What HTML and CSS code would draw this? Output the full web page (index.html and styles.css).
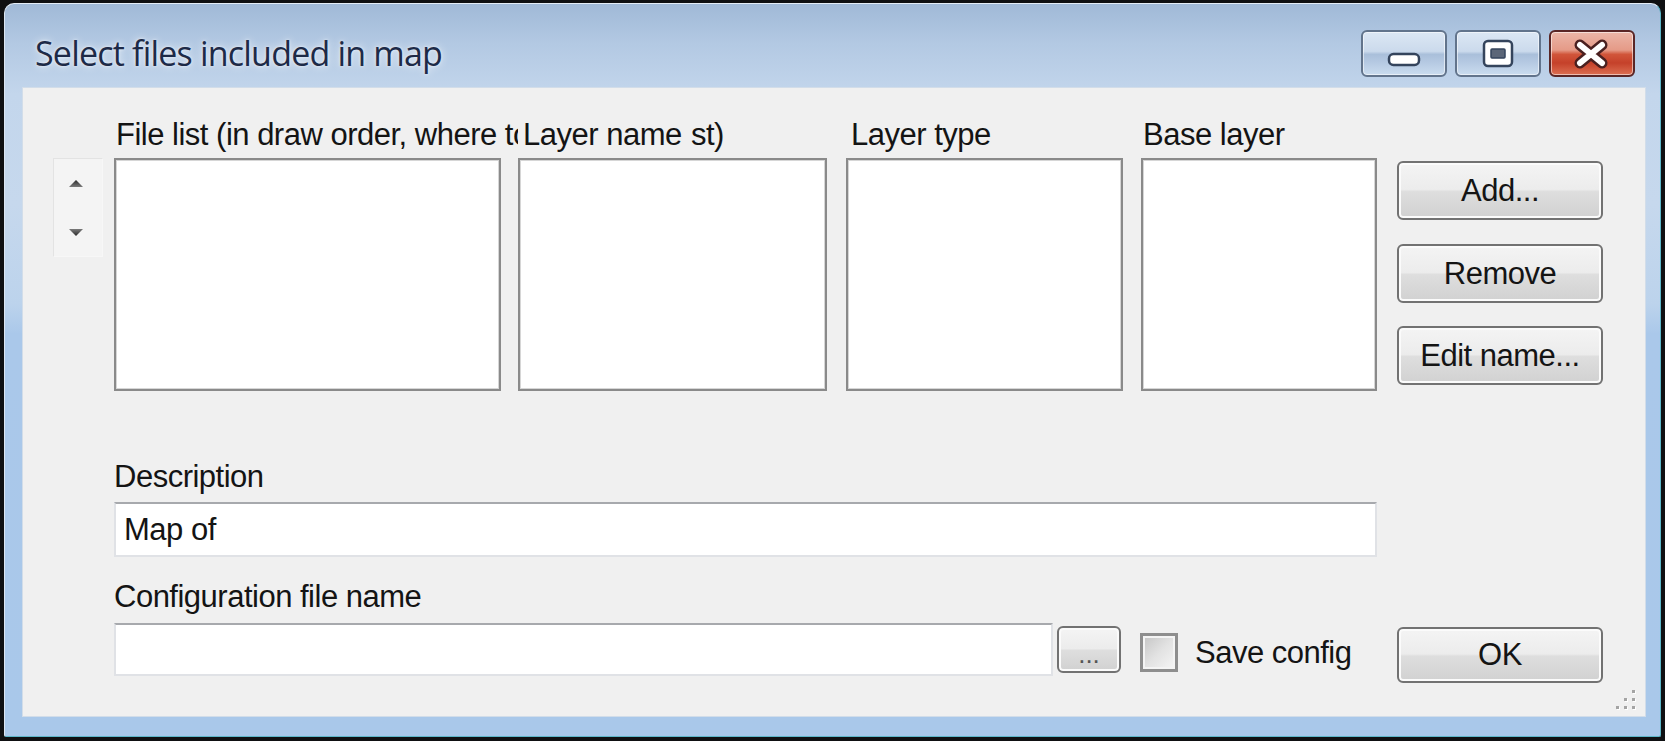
FILE: index.html
```html
<!DOCTYPE html>
<html lang="en">
<head>
<meta charset="utf-8">
<title>Select files included in map</title>
<link rel="stylesheet" href="styles.css">
</head>
<body>
<div class="window">
  <div class="titlebar">
    <div class="title">Select files included in map</div>
    <div class="caption">
      <div class="cap-btn">
        <svg width="82" height="43" viewBox="0 0 82 43"><rect x="26" y="22" width="30" height="11" rx="4.5" fill="#ffffff" stroke="#34445c" stroke-width="2.5"/></svg>
      </div>
      <div class="cap-btn">
        <svg width="82" height="43" viewBox="0 0 82 43"><rect x="27" y="9" width="28" height="25" rx="4" fill="#ffffff" stroke="#34445c" stroke-width="2.5"/><rect x="34" y="17" width="14" height="9" rx="1" fill="#5b6678" stroke="#34445c" stroke-width="1.5"/></svg>
      </div>
      <div class="cap-btn close">
        <svg width="82" height="43" viewBox="0 0 82 43"><path d="M29 13 L51 31 M51 13 L29 31" stroke="#4a2020" stroke-width="11" stroke-linecap="round"/><path d="M29 13 L51 31 M51 13 L29 31" stroke="#ffffff" stroke-width="6" stroke-linecap="round"/></svg>
      </div>
    </div>
  </div>
  <div class="client">
    <div class="top-row">
      <div class="order">
        <svg width="48" height="97" viewBox="0 0 48 97">
          <defs>
            <linearGradient id="ag" x1="0" y1="0" x2="0" y2="1"><stop offset="0" stop-color="#2a2a2a"/><stop offset="1" stop-color="#7a7a7a"/></linearGradient>
            <linearGradient id="dg" x1="0" y1="0" x2="0" y2="1"><stop offset="0" stop-color="#7a7a7a"/><stop offset="1" stop-color="#2a2a2a"/></linearGradient>
          </defs>
          <polygon points="15,28 29,28 22,21" fill="url(#ag)"/>
          <polygon points="15,70 29,70 22,77" fill="url(#dg)"/>
        </svg>
      </div>
      <div class="col col1">
        <div class="lbl lbl-clip">File list (in draw order, where top is last)</div>
        <div class="listbox"></div>
      </div>
      <div class="col col2">
        <div class="lbl lbl-cover"><span class="lbl-name">Layer name</span><span class="lbl-tail">st)</span></div>
        <div class="listbox"></div>
      </div>
      <div class="col col3">
        <div class="lbl lbl-type">Layer type</div>
        <div class="listbox"></div>
      </div>
      <div class="col col4">
        <div class="lbl lbl-base">Base layer</div>
        <div class="listbox"></div>
      </div>
      <div class="btn-col">
        <div class="btn">Add...</div>
        <div class="btn btn-remove">Remove</div>
        <div class="btn btn-last">Edit name...</div>
      </div>
    </div>
    <div class="field desc">
      <div class="lbl">Description</div>
      <div class="textbox desc-box">Map of</div>
    </div>
    <div class="field config">
      <div class="lbl">Configuration file name</div>
      <div class="config-row">
        <div class="textbox cfg-box"></div>
        <div class="btn browse">...</div>
        <div class="checkbox"></div>
        <div class="check-label">Save config</div>
        <div class="btn ok">OK</div>
      </div>
    </div>
    <svg class="grip" width="22" height="23" viewBox="0 0 22 23">
      <g fill="#ffffff"><rect x="18" y="3" width="3" height="3"/><rect x="10" y="11" width="3" height="3"/><rect x="18" y="11" width="3" height="3"/><rect x="2" y="19" width="3" height="3"/><rect x="10" y="19" width="3" height="3"/><rect x="18" y="19" width="3" height="3"/></g>
      <g fill="#a4a4a4"><rect x="17" y="2" width="3" height="3"/><rect x="9" y="10" width="3" height="3"/><rect x="17" y="10" width="3" height="3"/><rect x="1" y="18" width="3" height="3"/><rect x="9" y="18" width="3" height="3"/><rect x="17" y="18" width="3" height="3"/></g>
    </svg>
  </div>
</div>
</body>
</html>
```
FILE: styles.css
```css
html, body {
  margin: 0;
  padding: 0;
}
body {
  background: #0f1012;
  width: 1665px;
  height: 741px;
  overflow: hidden;
}
.window {
  box-sizing: border-box;
  margin: 3px 0 0 4px;
  width: 1657px;
  height: 734px;
  border: 1px solid;
  border-color: #e4edf7 #5cb6c9 #5cb6c9 #dbe6f2;
  border-radius: 10px 10px 2px 2px;
  background: linear-gradient(180deg, #a0b9d7 0px, #b3c9e3 40px, #c3d6ec 90px, #c6d8ed 200px, #bcd3ec 300px, #aac8ea 330px, #a9c8ea 734px);
  display: flex;
  flex-direction: column;
}
.titlebar {
  height: 84px;
  display: flex;
  justify-content: space-between;
  align-items: flex-start;
  flex-shrink: 0;
}
.title {
  margin: 29px 0 0 30px;
  font-family: "Open Sans", "Noto Sans", sans-serif;
  font-size: 34px;
  line-height: 40px;
  letter-spacing: -0.8px;
  color: #1d2a47;
  text-shadow: 0 0 8px rgba(255, 255, 255, 0.8), 0 0 3px rgba(255, 255, 255, 0.7);
  white-space: nowrap;
}
.caption {
  display: flex;
  gap: 8px;
  margin: 26px 25px 0 0;
}
.cap-btn {
  box-sizing: border-box;
  width: 86px;
  height: 47px;
  border: 2px solid #62748c;
  border-radius: 6px;
  background: linear-gradient(180deg, #dce7f4 0%, #cbdaec 45%, #a9bfda 52%, #b5c9e2 70%, #cadcef 100%);
  box-shadow: inset 0 0 0 1px rgba(255, 255, 255, 0.55);
}
.cap-btn svg {
  display: block;
}
.cap-btn.close {
  border-color: #5a2626;
  background: linear-gradient(180deg, #ebb6a8 0%, #e59a87 42%, #d1553a 52%, #c5412a 72%, #dc6f52 100%);
}
.client {
  position: relative;
  box-sizing: border-box;
  margin: 0 15px 0 18px;
  height: 628px;
  background: #f0f0f0;
  box-shadow: 0 0 0 1px #d2dde9;
  padding: 29px 42px 0 30px;
  font-family: "Liberation Sans", Arial, sans-serif;
  font-size: 31px;
  letter-spacing: -0.5px;
  color: #141414;
}
.top-row {
  display: flex;
  align-items: flex-start;
}
.order {
  box-sizing: border-box;
  width: 50px;
  height: 99px;
  margin-top: 41px;
  margin-right: 11px;
  background: #f4f4f4;
  border: 1px solid #e3e3e3;
  border-right-color: #f7f7f7;
  border-bottom-color: #f7f7f7;
}
.order svg {
  display: block;
}
.col1 { width: 387px; margin-right: 17px; }
.col2 { width: 309px; margin-right: 19px; }
.col3 { width: 277px; margin-right: 18px; }
.col4 { width: 236px; margin-right: 20px; }
.lbl {
  height: 36px;
  line-height: 36px;
  margin-bottom: 5px;
  white-space: nowrap;
}
.lbl-clip {
  width: 404px;
  overflow: hidden;
  padding-left: 2px;
  box-sizing: border-box;
}
.lbl-cover {
  display: flex;
  padding-left: 5px;
  background: #f0f0f0;
}
.lbl-name {
  flex: 0 0 168px;
}
.lbl-type { padding-left: 5px; }
.lbl-base { padding-left: 2px; }
.listbox {
  box-sizing: border-box;
  height: 233px;
  background: #ffffff;
  border: 2px solid #8a8a8a;
  box-shadow: inset 0 0 0 1px #d6d6d6;
}
.btn-col {
  width: 206px;
  padding-top: 44px;
}
.btn {
  box-sizing: border-box;
  height: 59px;
  margin-bottom: 24px;
  border: 2px solid #727272;
  border-radius: 6px;
  background: linear-gradient(180deg, #f4f4f4 0%, #ececec 48%, #dedede 52%, #d1d1d1 100%);
  box-shadow: inset 0 0 0 2px #fbfbfb;
  display: flex;
  align-items: center;
  justify-content: center;
  line-height: 36px;
  white-space: nowrap;
}
.btn-remove {
  margin-bottom: 23px;
}
.btn-last {
  margin-bottom: 0;
}
.field {
  margin-left: 61px;
}
.field.desc {
  margin-top: 68px;
}
.field .lbl {
  margin-bottom: 7px;
}
.textbox {
  box-sizing: border-box;
  background: #ffffff;
  border: 2px solid #e0e2e6;
  border-top-color: #a7a9ad;
}
.desc-box {
  width: 1263px;
  height: 55px;
  line-height: 51px;
  padding-left: 8px;
}
.field.config {
  margin-top: 22px;
}
.field.config .lbl {
  margin-bottom: 8px;
}
.config-row {
  display: flex;
  align-items: flex-start;
}
.cfg-box {
  width: 939px;
  height: 53px;
}
.browse {
  width: 64px;
  height: 47px;
  margin: 3px 0 0 4px;
  padding-top: 8px;
  font-size: 26px;
  color: #555555;
  letter-spacing: 0;
}
.checkbox {
  box-sizing: border-box;
  width: 38px;
  height: 39px;
  margin: 10px 0 0 19px;
  border: 3px solid #8e8e8e;
  background: linear-gradient(135deg, #c4c4c4 0%, #e2e2e2 50%, #f6f6f6 100%);
  box-shadow: inset 0 0 0 2px #f4f4f4;
}
.check-label {
  margin: 12px 0 0 17px;
  line-height: 36px;
  white-space: nowrap;
}
.ok {
  width: 206px;
  height: 56px;
  margin: 4px 0 0 auto;
}
.grip {
  position: absolute;
  right: 8px;
  bottom: 5px;
  display: block;
}
```
